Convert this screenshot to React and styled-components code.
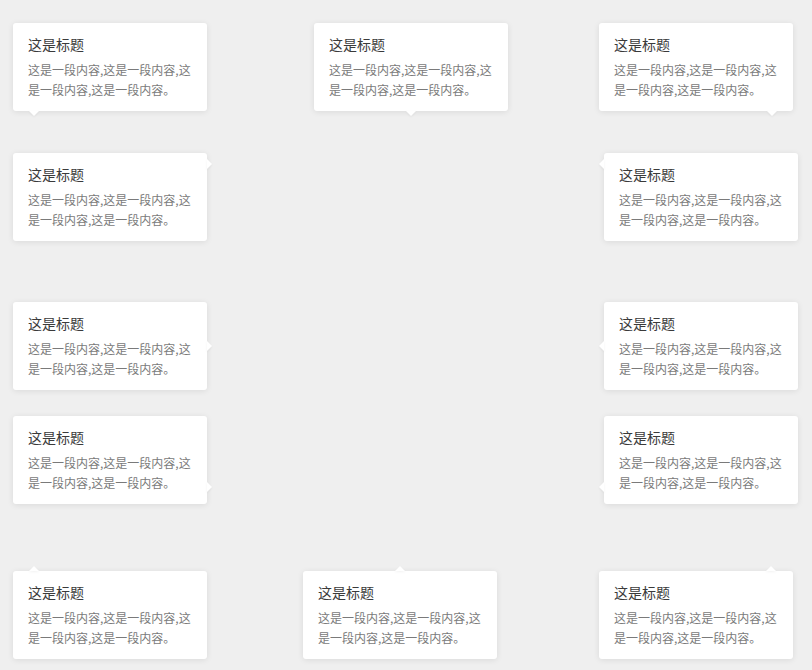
import React from 'react';
import styled, { createGlobalStyle, css } from 'styled-components';

const GlobalStyle = createGlobalStyle`
  html, body {
    margin: 0;
    padding: 0;
    background: #efefef;
  }
  body {
    font-family: "Noto Sans CJK SC", "Noto Sans", sans-serif;
    -webkit-font-smoothing: antialiased;
  }
`;

const TITLE = '这是标题';
const BODY = '这是一段内容,这是一段内容,这是一段内容,这是一段内容。';

// each row: gap above it, then each tip with its gap from the previous one
const rows = [
  { top: 23, tips: [{ gap: 13, at: 'bottom-start' }, { gap: 107, at: 'bottom' }, { gap: 91, at: 'bottom-end' }] },
  { top: 42, tips: [{ gap: 13, at: 'right-start' }, { gap: 397, at: 'left-start' }] },
  { top: 61, tips: [{ gap: 13, at: 'right' }, { gap: 397, at: 'left' }] },
  { top: 26, tips: [{ gap: 13, at: 'right-end' }, { gap: 397, at: 'left-end' }] },
  { top: 67, tips: [{ gap: 13, at: 'top-start' }, { gap: 96, at: 'top' }, { gap: 102, at: 'top-end' }] },
];

export default function App() {
  return (
    <>
      <GlobalStyle />
      <Page>
        {rows.map((row, i) => (
          <Row key={i} $top={row.top}>
            {row.tips.map((tip, j) => (
              <Poptip key={j} $gap={tip.gap} $arrow={tip.at}>
                <Title>{TITLE}</Title>
                <Content>{BODY}</Content>
              </Poptip>
            ))}
          </Row>
        ))}
      </Page>
    </>
  );
}

const Page = styled.div`
  width: 812px;
  min-height: 670px;
  display: flex;
  flex-direction: column;
`;

const Row = styled.div`
  display: flex;
  margin-top: ${p => p.$top}px;
`;

// arrow is a 10x5 css triangle pointing away from the card
const arrowStyles = {
  bottom: css`top: 100%; left: 50%; margin-left: -5px; border-width: 5px 5px 0; border-top-color: #fff;`,
  'bottom-start': css`top: 100%; left: 16px; border-width: 5px 5px 0; border-top-color: #fff;`,
  'bottom-end': css`top: 100%; right: 16px; border-width: 5px 5px 0; border-top-color: #fff;`,
  top: css`bottom: 100%; left: 50%; margin-left: -5px; border-width: 0 5px 5px; border-bottom-color: #fff;`,
  'top-start': css`bottom: 100%; left: 16px; border-width: 0 5px 5px; border-bottom-color: #fff;`,
  'top-end': css`bottom: 100%; right: 17px; border-width: 0 5px 5px; border-bottom-color: #fff;`,
  right: css`left: 100%; top: 50%; margin-top: -5px; border-width: 5px 0 5px 5px; border-left-color: #fff;`,
  'right-start': css`left: 100%; top: 6px; border-width: 5px 0 5px 5px; border-left-color: #fff;`,
  'right-end': css`left: 100%; bottom: 12px; border-width: 5px 0 5px 5px; border-left-color: #fff;`,
  left: css`right: 100%; top: 50%; margin-top: -5px; border-width: 5px 5px 5px 0; border-right-color: #fff;`,
  'left-start': css`right: 100%; top: 6px; border-width: 5px 5px 5px 0; border-right-color: #fff;`,
  'left-end': css`right: 100%; bottom: 12px; border-width: 5px 5px 5px 0; border-right-color: #fff;`,
};

const Poptip = styled.div`
  position: relative;
  box-sizing: border-box;
  flex: none;
  width: 194px;
  height: 88px;
  margin-left: ${p => p.$gap}px;
  padding: 11px 14px 11px 15px;
  background: #fff;
  border-radius: 3px;
  box-shadow: 0 1px 6px rgba(0, 0, 0, 0.09);

  &::after {
    content: '';
    position: absolute;
    width: 0;
    height: 0;
    border-style: solid;
    border-color: transparent;
    filter: drop-shadow(0 1px 1px rgba(0, 0, 0, 0.05));
    ${p => arrowStyles[p.$arrow]}
  }
`;

const Title = styled.div`
  font-size: 14px;
  line-height: 20px;
  color: #3a3a3a;
`;

const Content = styled.div`
  margin-top: 6px;
  font-size: 12px;
  line-height: 20px;
  color: #7a7a7a;
  word-break: break-all;
`;
